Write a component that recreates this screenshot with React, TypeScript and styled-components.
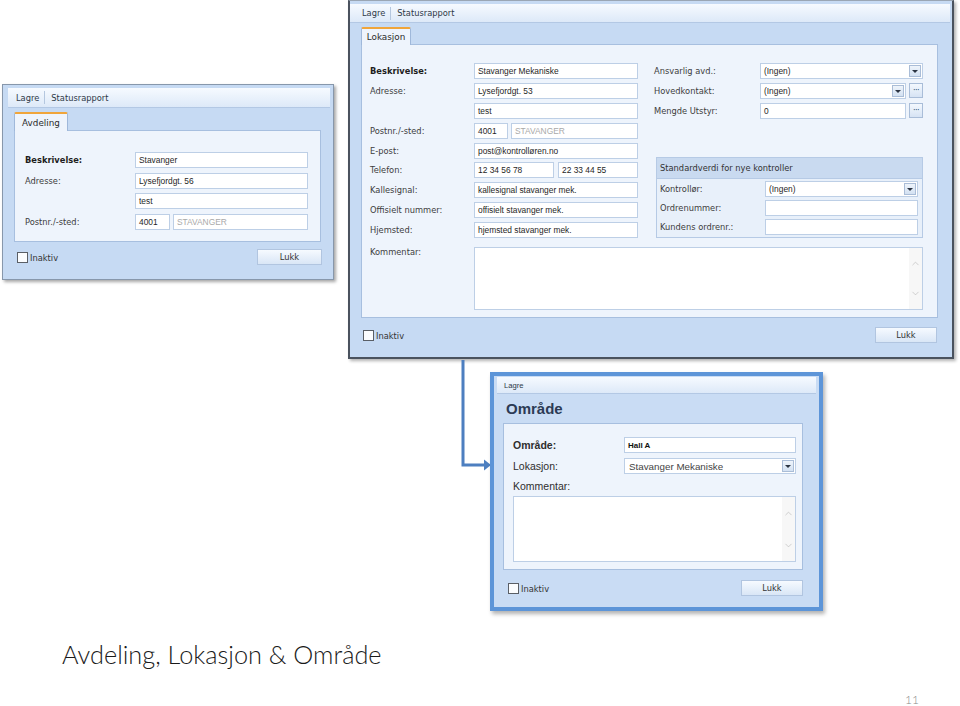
import React from "react";
import styled, { createGlobalStyle, css } from "styled-components";
import { ChevronUp, ChevronDown } from "lucide-react";

const GlobalStyle = createGlobalStyle`
  html, body { margin: 0; padding: 0; background: #fff; }
  * { box-sizing: border-box; }
`;

const Slide = styled.div`
  position: relative;
  width: 960px;
  height: 706px;
  overflow: hidden;
  background: #fff;
  font-family: "DejaVu Sans", Verdana, sans-serif;
`;

type Kind = "plain" | "dark" | "blue";

const Window = styled.div<{ $kind: Kind; $left: number; $top: number; $width: number; $height: number }>`
  position: absolute;
  left: ${(p) => p.$left}px;
  top: ${(p) => p.$top}px;
  width: ${(p) => p.$width}px;
  height: ${(p) => p.$height}px;
  display: flex;
  flex-direction: column;
  background: #c6daf3;
  ${(p) =>
    p.$kind === "plain" &&
    css`
      border: 1px solid #8797ab;
      padding: 3px 3px 0 5px;
      box-shadow: 2px 2px 3px rgba(0, 0, 0, 0.35);
    `}
  ${(p) =>
    p.$kind === "dark" &&
    css`
      border: 2px solid #4a525e;
      border-top: 1px solid #9aa6b4;
      padding: 3px 2px 0 0;
      box-shadow: 2px 2px 3px rgba(0, 0, 0, 0.3);
    `}
  ${(p) =>
    p.$kind === "blue" &&
    css`
      border: 4px solid #5d95d8;
      padding: 1px 3px 0 3px;
      background: #c9dcf4;
      box-shadow: 2px 3px 4px rgba(0, 0, 0, 0.3);
    `}
`;

const Toolbar = styled.div<{ $h: number; $pad: number; $small?: boolean }>`
  height: ${(p) => p.$h}px;
  flex: 0 0 auto;
  display: flex;
  align-items: center;
  padding-left: ${(p) => p.$pad}px;
  background: linear-gradient(#f6faff, #dde9f8);
  border-bottom: 1px solid #b3c8e4;
  color: #2f3a48;
  font-size: ${(p) => (p.$small ? "7.6px" : "8.3px")};
  font-family: ${(p) => (p.$small ? `"Liberation Sans", Arial, sans-serif` : `"DejaVu Sans", Verdana, sans-serif`)};
`;

const ToolSep = styled.span`
  width: 1px;
  height: 13px;
  background: #b4c7df;
  margin: 0 6px 0 5px;
`;

const Body = styled.div<{ $ml: number; $mr: number }>`
  display: flex;
  flex-direction: column;
  margin: 0 ${(p) => p.$mr}px 0 ${(p) => p.$ml}px;
`;

const TabStrip = styled.div<{ $h: number }>`
  height: ${(p) => p.$h}px;
  display: flex;
  align-items: flex-end;
`;

const Tab = styled.div<{ $w: number; $h: number }>`
  width: ${(p) => p.$w}px;
  height: ${(p) => p.$h + 1}px;
  margin-bottom: -1px;
  position: relative;
  z-index: 1;
  background: #eef4fc;
  border: 1px solid #9fb8da;
  border-top: 2px solid #f0a53a;
  border-bottom: none;
  border-radius: 2px 2px 0 0;
  display: flex;
  align-items: center;
  justify-content: center;
  font-size: 8.8px;
  color: #2b2b2b;
`;

const Panel = styled.div<{ $h: number; $pad: string }>`
  height: ${(p) => p.$h}px;
  background: #eef4fc;
  border: 1px solid #a7bfdf;
  padding: ${(p) => p.$pad};
`;

const TitleBar = styled.div`
  height: 29px;
  display: flex;
  align-items: center;
  padding-left: 9px;
  font-family: "Liberation Sans", Arial, sans-serif;
  font-weight: bold;
  font-size: 15px;
  color: #2c3b55;
`;

const FormGrid = styled.div<{ $label: number; $gap: number; $row?: number }>`
  display: grid;
  grid-template-columns: ${(p) => p.$label}px 1fr;
  grid-auto-rows: ${(p) => p.$row ?? 16}px;
  row-gap: ${(p) => p.$gap}px;
`;

const Label = styled.div<{ $bold?: boolean; $large?: boolean; $top?: boolean }>`
  display: flex;
  align-items: ${(p) => (p.$top ? "flex-start" : "center")};
  white-space: nowrap;
  font-size: 8.3px;
  color: #3d3d3d;
  ${(p) => p.$bold && css`font-weight: bold; color: #1e1e1e;`}
  ${(p) =>
    p.$large &&
    css`
      font-family: "Liberation Sans", Arial, sans-serif;
      font-size: 10.5px;
      color: #2e2e2e;
    `}
`;

const CommentLabel = styled(Label)`
  margin-top: 6px;
`;

const Pair = styled.div<{ $gap: number }>`
  display: flex;
  gap: ${(p) => p.$gap}px;
  min-width: 0;
`;

const Field = styled.div<{ $w?: number; $muted?: boolean; $large?: boolean; $strong?: boolean }>`
  flex: ${(p) => (p.$w ? `0 0 ${p.$w}px` : "1 1 0")};
  min-width: 0;
  height: 100%;
  display: flex;
  align-items: center;
  padding: 0 3px;
  background: #fff;
  border: 1px solid #bdcfe6;
  overflow: hidden;
  white-space: nowrap;
  font-family: "Liberation Sans", Arial, sans-serif;
  font-size: 8.4px;
  color: ${(p) => (p.$muted ? "#a9a9a9" : "#1f1f1f")};
  ${(p) => p.$large && css`font-size: 9.8px; color: #444; padding-left: 4px;`}
  ${(p) => p.$strong && css`font-weight: bold; font-size: 8px; color: #111;`}
`;

const FieldText = styled.span`
  flex: 1 1 auto;
`;

const DropButton = styled.span`
  flex: 0 0 12px;
  height: 12px;
  margin-right: -2px;
  border: 1px solid #aabdd7;
  background: linear-gradient(#eef4fb, #d3e1f2);
  display: flex;
  align-items: center;
  justify-content: center;
  &::after {
    content: "";
    border-left: 3px solid transparent;
    border-right: 3px solid transparent;
    border-top: 3px solid #2b3442;
  }
`;

const DotsButton = styled.div`
  flex: 0 0 14px;
  height: 15px;
  border: 1px solid #a9bdd8;
  background: linear-gradient(#f3f8fe, #d6e3f4);
  display: flex;
  align-items: center;
  justify-content: center;
  font-size: 8px;
  color: #27456f;
  letter-spacing: -0.5px;
`;

const Columns = styled.div`
  display: grid;
  grid-template-columns: 268px 1fr;
  column-gap: 16px;
`;

const GroupBox = styled.div`
  margin: 38px 0 0 2px;
  border: 1px solid #b6cae5;
  background: #e8f0fa;
`;

const GroupHeader = styled.div`
  height: 21px;
  display: flex;
  align-items: center;
  padding-left: 3px;
  background: #c9daf0;
  border-bottom: 1px solid #b6cae5;
  font-size: 8.3px;
  color: #333;
`;

const GroupBody = styled.div`
  padding: 2px 4px 2px 3px;
`;

const CommentRow = styled.div<{ $mt: number; $label: number }>`
  display: grid;
  grid-template-columns: ${(p) => p.$label}px 1fr;
  margin-top: ${(p) => p.$mt}px;
`;

const TextArea = styled.div<{ $h: number; $mt?: number }>`
  height: ${(p) => p.$h}px;
  margin-top: ${(p) => p.$mt ?? 0}px;
  background: #fff;
  border: 1px solid #bdcfe6;
  display: flex;
  justify-content: flex-end;
`;

const ScrollCol = styled.div`
  width: 13px;
  background: #f7f7f7;
  display: flex;
  flex-direction: column;
  justify-content: space-around;
  align-items: center;
  color: #b9b9b9;
`;

const Footer = styled.div<{ $pt: number; $pl: number; $pr: number }>`
  flex: 1 1 auto;
  display: flex;
  justify-content: space-between;
  align-items: flex-start;
  padding: ${(p) => p.$pt}px ${(p) => p.$pr}px 0 ${(p) => p.$pl}px;
`;

const CheckRow = styled.div`
  margin-top: 3px;
  display: flex;
  align-items: center;
  gap: 2px;
  font-size: 8.3px;
  color: #333;
`;

const CheckBox = styled.span`
  width: 11px;
  height: 11px;
  background: #fbfdff;
  border: 1px solid #5a5f66;
`;

const Button = styled.div<{ $w: number }>`
  width: ${(p) => p.$w}px;
  height: 16px;
  display: flex;
  align-items: center;
  justify-content: center;
  border: 1px solid #b1c5e0;
  background: linear-gradient(#f6faff, #d9e6f6);
  font-size: 8.3px;
  color: #333;
`;

const Arrow = styled.svg`
  position: absolute;
  left: 455px;
  top: 355px;
  overflow: visible;
`;

const Caption = styled.div`
  position: absolute;
  left: 62px;
  top: 639px;
  font-family: Lato, "Open Sans", sans-serif;
  font-weight: 300;
  font-size: 25.3px;
  color: #1a1a1a;
  white-space: nowrap;
`;

const PageNo = styled.div`
  position: absolute;
  left: 905px;
  top: 692px;
  font-family: Lato, "Open Sans", sans-serif;
  font-weight: 300;
  font-size: 12px;
  color: #8a8a8a;
`;

const Select = ({ value, large }: { value: string; large?: boolean }) => (
  <Field $large={large}>
    <FieldText>{value}</FieldText>
    <DropButton />
  </Field>
);

const Scroll = () => (
  <ScrollCol>
    <ChevronUp size={11} strokeWidth={1.4} />
    <ChevronDown size={11} strokeWidth={1.4} />
  </ScrollCol>
);

export default function App() {
  return (
    <>
      <GlobalStyle />
      <Slide>
        {/* Avdeling */}
        <Window $kind="plain" $left={2} $top={84} $width={332} $height={196}>
          <Toolbar $h={20} $pad={8}>
            Lagre
            <ToolSep />
            Statusrapport
          </Toolbar>
          <Body $ml={6} $mr={9}>
            <TabStrip $h={22}>
              <Tab $w={54} $h={18}>Avdeling</Tab>
            </TabStrip>
            <Panel $h={112} $pad="21px 12px 0 10px">
              <FormGrid $label={110} $gap={4.67}>
                <Label $bold>Beskrivelse:</Label>
                <Field>Stavanger</Field>
                <Label>Adresse:</Label>
                <Field>Lysefjordgt. 56</Field>
                <span />
                <Field>test</Field>
                <Label>Postnr./-sted:</Label>
                <Pair $gap={3}>
                  <Field $w={35}>4001</Field>
                  <Field $muted>STAVANGER</Field>
                </Pair>
              </FormGrid>
            </Panel>
          </Body>
          <Footer $pt={7} $pl={9} $pr={8}>
            <CheckRow>
              <CheckBox />
              Inaktiv
            </CheckRow>
            <Button $w={65}>Lukk</Button>
          </Footer>
        </Window>

        {/* Lokasjon */}
        <Window $kind="dark" $left={348} $top={0} $width={606} $height={359}>
          <Toolbar $h={19} $pad={12}>
            Lagre
            <ToolSep />
            Statusrapport
          </Toolbar>
          <Body $ml={11} $mr={12}>
            <TabStrip $h={21}>
              <Tab $w={50} $h={17}>Lokasjon</Tab>
            </TabStrip>
            <Panel $h={274} $pad="18px 14px 0 8px">
              <Columns>
                <FormGrid $label={104} $gap={3.9}>
                  <Label $bold>Beskrivelse:</Label>
                  <Field>Stavanger Mekaniske</Field>
                  <Label>Adresse:</Label>
                  <Field>Lysefjordgt. 53</Field>
                  <span />
                  <Field>test</Field>
                  <Label>Postnr./-sted:</Label>
                  <Pair $gap={3}>
                    <Field $w={34}>4001</Field>
                    <Field $muted>STAVANGER</Field>
                  </Pair>
                  <Label>E-post:</Label>
                  <Field>post@kontrolløren.no</Field>
                  <Label>Telefon:</Label>
                  <Pair $gap={4}>
                    <Field>12 34 56 78</Field>
                    <Field>22 33 44 55</Field>
                  </Pair>
                  <Label>Kallesignal:</Label>
                  <Field>kallesignal stavanger mek.</Field>
                  <Label>Offisielt nummer:</Label>
                  <Field>offisielt stavanger mek.</Field>
                  <Label>Hjemsted:</Label>
                  <Field>hjemsted stavanger mek.</Field>
                </FormGrid>
                <div>
                  <FormGrid $label={106} $gap={4}>
                    <Label>Ansvarlig avd.:</Label>
                    <Select value="(Ingen)" />
                    <Label>Hovedkontakt:</Label>
                    <Pair $gap={3}>
                      <Select value="(Ingen)" />
                      <DotsButton>···</DotsButton>
                    </Pair>
                    <Label>Mengde Utstyr:</Label>
                    <Pair $gap={3}>
                      <Field>0</Field>
                      <DotsButton>···</DotsButton>
                    </Pair>
                  </FormGrid>
                  <GroupBox>
                    <GroupHeader>Standardverdi for nye kontroller</GroupHeader>
                    <GroupBody>
                      <FormGrid $label={105} $gap={3}>
                        <Label>Kontrollør:</Label>
                        <Select value="(Ingen)" />
                        <Label>Ordrenummer:</Label>
                        <Field />
                        <Label>Kundens ordrenr.:</Label>
                        <Field />
                      </FormGrid>
                    </GroupBody>
                  </GroupBox>
                </div>
              </Columns>
              <CommentRow $mt={9} $label={104}>
                <Label $top>Kommentar:</Label>
                <TextArea $h={63}>
                  <Scroll />
                </TextArea>
              </CommentRow>
            </Panel>
          </Body>
          <Footer $pt={9} $pl={13} $pr={13}>
            <CheckRow>
              <CheckBox />
              Inaktiv
            </CheckRow>
            <Button $w={62}>Lukk</Button>
          </Footer>
        </Window>

        <Arrow width={40} height={120} viewBox="0 0 40 120">
          <path d="M8 5 V110 H30" fill="none" stroke="#4d7fc0" strokeWidth={3} />
          <polygon points="29,104.5 36,110 29,115.5" fill="#4d7fc0" />
        </Arrow>

        {/* Område */}
        <Window $kind="blue" $left={490} $top={372} $width={333} $height={239}>
          <Toolbar $h={17} $pad={7} $small>
            Lagre
          </Toolbar>
          <TitleBar>Område</TitleBar>
          <Body $ml={6} $mr={13}>
            <Panel $h={147} $pad="13px 6px 0 9px">
              <FormGrid $label={111} $gap={5}>
                <Label $large $bold>Område:</Label>
                <Field $strong>Hall A</Field>
                <Label $large>Lokasjon:</Label>
                <Select value="Stavanger Mekaniske" large />
              </FormGrid>
              <CommentLabel $large>Kommentar:</CommentLabel>
              <TextArea $h={66} $mt={4}>
                <Scroll />
              </TextArea>
            </Panel>
          </Body>
          <Footer $pt={10} $pl={11} $pr={13}>
            <CheckRow>
              <CheckBox />
              Inaktiv
            </CheckRow>
            <Button $w={62}>Lukk</Button>
          </Footer>
        </Window>

        <Caption>Avdeling, Lokasjon &amp; Område</Caption>
        <PageNo>11</PageNo>
      </Slide>
    </>
  );
}
